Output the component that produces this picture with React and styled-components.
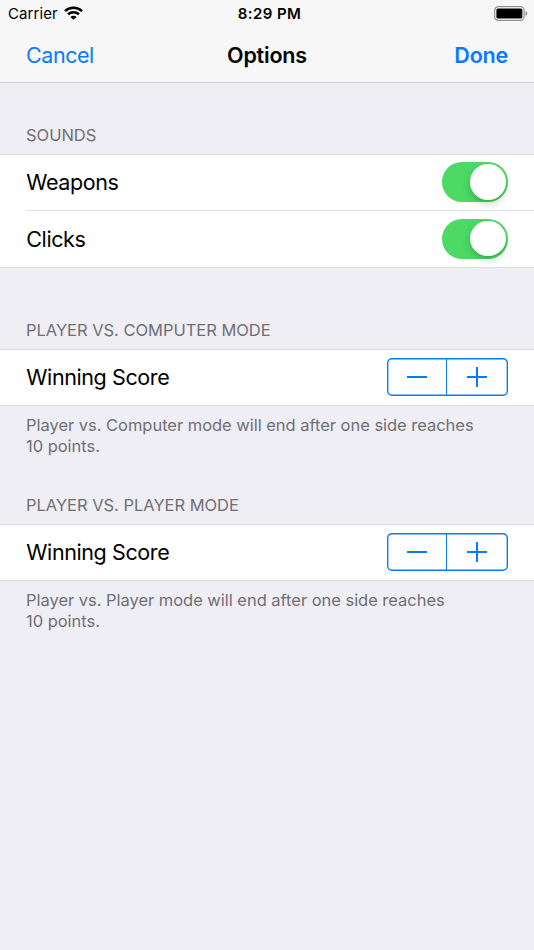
import { useState } from 'react';
import styled, { createGlobalStyle } from 'styled-components';

const GlobalStyle = createGlobalStyle`
  body {
    margin: 0;
    background: #efeef4;
    font-family: Inter, 'Liberation Sans', sans-serif;
  }
`;

const Screen = styled.div`
  min-height: 950px;
  background: #efeef4;
  color: #000;
`;

const Header = styled.header`
  height: 82px;
  background: #f7f7f8;
  border-bottom: 1px solid #cfcfd3;
`;

const StatusBar = styled.div`
  display: grid;
  grid-template-columns: 1fr auto 1fr;
  align-items: center;
  height: 27px;
  padding: 0 6px 0 8px;
  font-size: 15px;
  line-height: 27px;
`;

const Carrier = styled.div`
  display: flex;
  align-items: center;
  gap: 6px;
  letter-spacing: 0.1px;

  svg {
    margin-bottom: 1px;
  }
`;

const Clock = styled.div`
  padding-left: 3px;
  font-weight: 600;
  letter-spacing: 0.4px;
`;

const BatterySlot = styled.div`
  display: flex;
  justify-content: flex-end;
`;

const NavBar = styled.nav`
  display: grid;
  grid-template-columns: 1fr auto 1fr;
  align-items: center;
  height: 55px;
  padding: 0 26px;
`;

const Title = styled.h1`
  margin: 0;
  font-size: 21.5px;
  font-weight: 600;
  letter-spacing: -0.2px;
`;

const NavButton = styled.button`
  justify-self: ${({ $end }) => ($end ? 'end' : 'start')};
  padding: 0;
  border: none;
  background: none;
  color: #087aff;
  font-family: inherit;
  font-size: 21.5px;
  font-weight: ${({ $end }) => ($end ? 600 : 400)};
  letter-spacing: ${({ $end }) => ($end ? '-0.2px' : '-0.45px')};
`;

const Section = styled.section`
  display: flex;
  flex-direction: column;
`;

const SectionTitle = styled.h2`
  display: flex;
  align-items: flex-end;
  height: ${({ $height }) => $height}px;
  margin: 0;
  padding: 0 26px 9px;
  box-sizing: border-box;
  color: #6f6f74;
  font-size: 16.5px;
  font-weight: 400;
  line-height: 20px;
  letter-spacing: -0.03px;
`;

const Group = styled.div`
  background: #fff;
  border-top: 1px solid #dddce1;
  border-bottom: 1px solid #dddce1;
`;

const Row = styled.div`
  display: flex;
  align-items: center;
  justify-content: space-between;
  height: 55px;
  margin-left: 26px;
  padding: 0 26px 1px 0;
  box-sizing: border-box;

  & + & {
    height: 57px;
    border-top: 1px solid #e2e2e5;
  }
`;

const Label = styled.span`
  padding-left: 0.3px;
  font-size: 21.5px;
  letter-spacing: -0.4px;
`;

const Footnote = styled.p`
  height: 61px;
  margin: 0;
  padding: 9px 26px 0;
  box-sizing: border-box;
  color: #6f6f74;
  font-size: 16.5px;
  line-height: 21px;
  letter-spacing: -0.03px;
`;

const Toggle = styled.button`
  display: flex;
  justify-content: ${({ $on }) => ($on ? 'flex-end' : 'flex-start')};
  align-items: center;
  width: 66px;
  height: 40px;
  padding: 0 2.5px 0.5px;
  border: none;
  border-radius: 20px;
  background: ${({ $on }) => ($on ? '#4cd964' : '#e5e5ea')};
`;

const Knob = styled.span`
  width: 35.5px;
  height: 35.5px;
  border-radius: 50%;
  background: #fff;
  box-shadow: 0 4px 8px rgba(0, 0, 0, 0.16), 0 2px 2px rgba(0, 0, 0, 0.08);
`;

const StepperBox = styled.div`
  display: flex;
  width: 121px;
  height: 38px;
  box-sizing: border-box;
  border-radius: 5px;
  box-shadow: inset 0 0 0 1.4px #087aff;
`;

const StepButton = styled.button`
  flex: 1;
  display: flex;
  align-items: center;
  justify-content: center;
  padding: 0;
  border: none;
  background: none;

  & + & {
    padding-right: 2px;
    border-left: 1px solid #087aff;
  }
`;

const WifiIcon = () => (
  <svg width="19" height="14" viewBox="0 0 19 14" fill="none" stroke="#000" strokeWidth="2.5">
    <path d="M1 5.1C5.7.6 13.3.6 18 5.1" />
    <path d="M4 8.3c3.2-2.9 7.8-2.9 11 0" />
    <path d="M6.4 10.9c1.8-1.7 4.4-1.7 6.2 0L9.5 13.8z" fill="#000" stroke="none" />
  </svg>
);

const BatteryIcon = () => (
  <svg width="34" height="15" viewBox="0 0 34 15">
    <rect x="0.7" y="0.7" width="29.4" height="13.6" rx="3.6" fill="#fff" stroke="#8f8f91" strokeWidth="1.2" />
    <rect x="2.4" y="2.5" width="26" height="10" rx="1.6" />
    <path d="M31.6 5.2c2 .7 2 3.9 0 4.6z" fill="#7c7c7e" />
  </svg>
);

const StepIcon = ({ plus }) => (
  <svg width="20" height="20" viewBox="0 0 20 20" stroke="#087aff" strokeWidth="2">
    <path d={plus ? 'M0 10H20M10 0V20' : 'M0 10H20'} />
  </svg>
);

const Switch = ({ label }) => {
  const [on, setOn] = useState(true);
  return (
    <Toggle role="switch" aria-checked={on} aria-label={label} $on={on} onClick={() => setOn(!on)}>
      <Knob />
    </Toggle>
  );
};

const ScoreSection = ({ title, mode, titleHeight }) => {
  const [score, setScore] = useState(10);
  return (
    <Section>
      <SectionTitle $height={titleHeight}>{title}</SectionTitle>
      <Group>
        <Row>
          <Label>Winning Score</Label>
          <StepperBox>
            <StepButton aria-label="Decrease" onClick={() => setScore(Math.max(1, score - 1))}>
              <StepIcon />
            </StepButton>
            <StepButton aria-label="Increase" onClick={() => setScore(score + 1)}>
              <StepIcon plus />
            </StepButton>
          </StepperBox>
        </Row>
      </Group>
      <Footnote>
        {mode} mode will end after one side reaches
        <br />
        {score} points.
      </Footnote>
    </Section>
  );
};

export default function App() {
  return (
    <Screen>
      <GlobalStyle />
      <Header>
        <StatusBar>
          <Carrier>
            Carrier
            <WifiIcon />
          </Carrier>
          <Clock>8:29 PM</Clock>
          <BatterySlot>
            <BatteryIcon />
          </BatterySlot>
        </StatusBar>
        <NavBar>
          <NavButton>Cancel</NavButton>
          <Title>Options</Title>
          <NavButton $end>Done</NavButton>
        </NavBar>
      </Header>
      <Section>
        <SectionTitle $height={71}>SOUNDS</SectionTitle>
        <Group>
          <Row>
            <Label>Weapons</Label>
            <Switch label="Weapons" />
          </Row>
          <Row>
            <Label>Clicks</Label>
            <Switch label="Clicks" />
          </Row>
        </Group>
      </Section>
      <ScoreSection title="PLAYER VS. COMPUTER MODE" mode="Player vs. Computer" titleHeight={81} />
      <ScoreSection title="PLAYER VS. PLAYER MODE" mode="Player vs. Player" titleHeight={57} />
    </Screen>
  );
}
